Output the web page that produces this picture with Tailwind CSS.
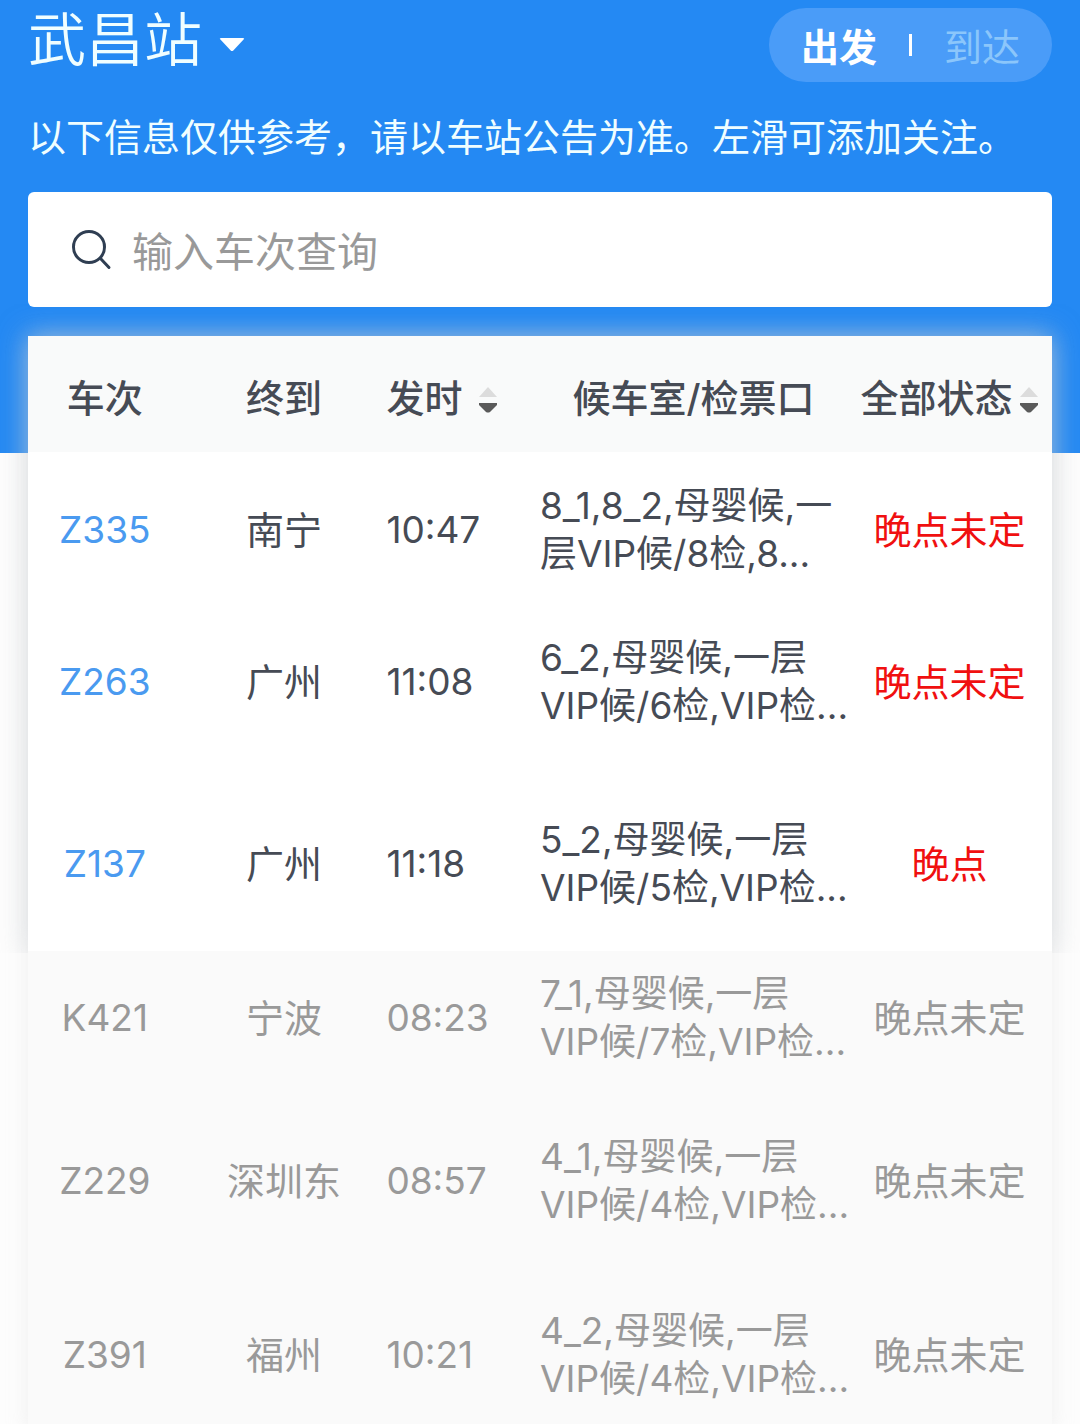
<!DOCTYPE html>
<html lang="zh-CN">
<head>
  <meta charset="UTF-8">
  <meta name="viewport" content="width=device-width, initial-scale=1">
  <title>车站大屏</title>
  <script src="https://cdn.jsdelivr.net/npm/@tailwindcss/browser@4"></script>
</head>
<body class="min-h-screen overflow-x-hidden bg-[#fdfdfd] font-['Inter','Noto_Sans_CJK_SC',sans-serif] text-[#464b55]">

  <header class="bg-[#2489f3] px-7 pt-2 pb-[146px] text-[#f0feff]">
    <div class="flex items-start justify-between">
      <label class="-my-2.5 flex items-center gap-4">
        <span class="sr-only">车站</span>
        <select class="h-[84px] cursor-pointer appearance-none bg-transparent text-[58px]/[84px] font-[350] focus:outline-none">
          <option>武昌站</option>
        </select>
        <svg class="mt-2 h-[15px] w-[26px]" viewBox="0 0 26 15" fill="#fff" aria-hidden="true"><path d="M2 1h22q2 0 .6 1.6L14.300 13.500q-1.300 1.200-2.600 0L1.400 2.600Q0 1 2 1z"/></svg>
      </label>

      <!-- 出发 / 到达 -->
      <div class="flex h-[74px] items-center gap-8 rounded-full bg-[#4a9cf8] px-8 text-[38px]/[48px]">
        <button type="button" class="cursor-pointer pt-1 font-bold text-white">出发</button>
        <span class="h-[22px] w-[3px] bg-white"></span>
        <button type="button" class="cursor-pointer pt-1 text-[#8bc6fb]">到达</button>
      </div>
    </div>

    <p class="mt-7 text-[38px]/[54px] whitespace-nowrap">以下信息仅供参考，请以车站公告为准。左滑可添加关注。</p>

    <form id="searchForm" class="mt-7 flex h-[115px] items-center gap-5 rounded-md bg-white px-11">
      <label for="trainNo" aria-label="车次查询">
        <svg class="h-10 w-10" viewBox="0 0 40 40" fill="none" stroke="#2f3e52" stroke-width="3" stroke-linecap="round" aria-hidden="true">
          <circle cx="17" cy="17" r="15.500"/>
          <path d="M28.500 28.500 37 37.500"/>
        </svg>
      </label>
      <input id="trainNo" type="text" placeholder="输入车次查询"
        class="h-16 min-w-0 flex-1 pt-1 text-[41px]/[60px] text-[#464b55] placeholder:text-[#999999] focus:outline-none" />
    </form>
  </header>

  <main class="relative z-0 mx-7 -mt-[117px] shadow-[0_0_20px_rgba(205,205,205,0.3)] before:absolute before:inset-x-0 before:top-0 before:-z-10 before:h-[617px] before:shadow-[0_0_28px_rgba(200,205,210,0.6)] before:[clip-path:inset(-32px_-32px_0_-32px)]">
    <table class="w-full table-fixed text-[37px]/[48px]">
      <colgroup>
        <col class="w-[15%]"><col class="w-[20%]"><col class="w-[15%]"><col class="w-[30%]"><col class="w-[20%]">
      </colgroup>
      <thead class="bg-[#f9fafa] text-[38px]/[48px]">
        <tr class="h-[116px] whitespace-nowrap">
          <th class="pt-2 font-medium">车次</th>
          <th class="pt-2 font-medium">终到</th>
          <th class="pt-2 font-medium">
            <button type="button" class="flex cursor-pointer items-center gap-4">发时
              <svg class="mt-1 h-7 w-5" viewBox="0 0 20 28" aria-hidden="true"><path d="M10 1 19 11H1z" fill="#dcdcdc"/><path d="M1 17h18v2l-7 7q-2 1-4 0l-7-7z" fill="#5a5a5a"/></svg>
            </button>
          </th>
          <th class="pt-2 font-medium">候车室/检票口</th>
          <th class="pt-2 font-medium">
            <button type="button" class="mx-auto flex cursor-pointer items-center gap-1.5">全部状态
              <svg class="mt-1 h-7 w-5" viewBox="0 0 20 28" aria-hidden="true"><path d="M10 1 19 11H1z" fill="#dcdcdc"/><path d="M1 17h18v2l-7 7q-2 1-4 0l-7-7z" fill="#5a5a5a"/></svg>
            </button>
          </th>
        </tr>
      </thead>
      <tbody id="trainList"></tbody>
    </table>
  </main>

  <script>
    const trains = [
      { no: 'Z335', to: '南宁', time: '10:47', gate: ['8_1,8_2,母婴候,一', '层VIP候/8检,8...'], status: '晚点未定', row: 'h-[156px]' },
      { no: 'Z263', to: '广州', time: '11:08', gate: ['6_2,母婴候,一层', 'VIP候/6检,VIP检...'], status: '晚点未定', row: 'h-[148px]' },
      { no: 'Z137', to: '广州', time: '11:18', gate: ['5_2,母婴候,一层', 'VIP候/5检,VIP检...'], status: '晚点', row: 'h-[195px] *:pt-5' },
      { no: 'K421', to: '宁波', time: '08:23', gate: ['7_1,母婴候,一层', 'VIP候/7检,VIP检...'], status: '晚点未定', row: 'h-[134px]', gone: true },
      { no: 'Z229', to: '深圳东', time: '08:57', gate: ['4_1,母婴候,一层', 'VIP候/4检,VIP检...'], status: '晚点未定', row: 'h-[192px]', gone: true },
      { no: 'Z391', to: '福州', time: '10:21', gate: ['4_2,母婴候,一层', 'VIP候/4检,VIP检...'], status: '晚点未定', row: 'h-[156px]', gone: true },
    ];

    function renderTrains(list) {
      document.getElementById('trainList').innerHTML = list.map(t => `
        <tr class="${t.row} whitespace-nowrap ${t.gone ? 'bg-[#fafafa] text-[#999999]' : 'bg-white'}">
          <td class="text-center">${t.gone ? t.no : `<a href="#${t.no}" class="text-[#4a9af0]">${t.no}</a>`}</td>
          <td class="text-center text-[38px]/[48px]">${t.to}</td>
          <td>${t.time}</td>
          <td>${t.gate.join('<br>')}</td>
          <td class="text-center text-[38px]/[48px] ${t.gone ? '' : 'text-[#f01010]'}">${t.status}</td>
        </tr>`).join('');
    }

    document.getElementById('searchForm').addEventListener('submit', (e) => {
      e.preventDefault();
      const q = document.getElementById('trainNo').value.trim().toUpperCase();
      renderTrains(trains.filter(t => t.no.includes(q)));
    });

    renderTrains(trains);
  </script>
</body>
</html>
